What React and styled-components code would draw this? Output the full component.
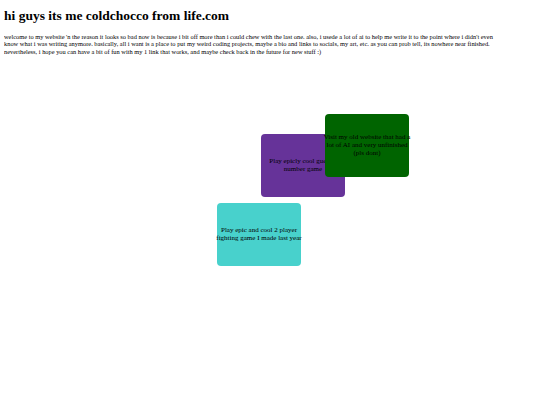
import React from "react";
import styled, { createGlobalStyle } from "styled-components";

const GlobalStyle = createGlobalStyle`
  body {
    margin: 3px 4px;
    font-family: "Liberation Serif", "Times New Roman", serif;
    background: #fff;
    color: #000;
  }
`;

const Title = styled.h1`
  font-size: 13.5px;
  font-weight: bold;
  margin: 5px 0 9px;
  line-height: 16px;
`;

const Intro = styled.p`
  font-size: 6.4px;
  line-height: 7.3px;
  margin: 0;
  max-width: 500px;
`;

const Canvas = styled.div`
  position: relative;
  height: 340px;
`;

const Card = styled.a`
  position: absolute;
  left: ${(p) => p.x}px;
  top: ${(p) => p.y}px;
  width: 84px;
  height: 63px;
  border-radius: 4px;
  background: ${(p) => p.bg};
  color: #000;
  text-decoration: none;
  font-size: 7px;
  line-height: 8px;
  display: flex;
  align-items: center;
  justify-content: center;
  text-align: center;
`;

const Label = styled.span`
  display: block;
  margin: 0 -3px;
`;

const cards = [
  { label: "Play epicly cool guess a number game", bg: "#663399", x: 257, y: 79 },
  { label: "Visit my old website that had a lot of AI and very unfinished (pls dont)", bg: "#006400", x: 321, y: 59 },
  { label: "Play epic and cool 2 player fighting game I made last year", bg: "#48d1cc", x: 213, y: 148 },
];

export default function App() {
  return (
    <>
      <GlobalStyle />
      <Title>hi guys its me coldchocco from life.com</Title>
      <Intro>
        welcome to my website 'n the reason it looks so bad now is because i bit off more than i could chew with the last one. also, i usede a lot of ai to help me write it to the point where i didn't even know what i was writing anymore. basically, all i want is a place to put my weird coding projects, maybe a bio and links to socials, my art, etc. as you can prob tell, its nowhere near finished. nevertheless, i hope you can have a bit of fun with my 1 link that works, and maybe check back in the future for new stuff :)
      </Intro>
      <Canvas>
        {cards.map((c) => (
          <Card key={c.label} href="#" bg={c.bg} x={c.x} y={c.y}>
            <Label>{c.label}</Label>
          </Card>
        ))}
      </Canvas>
    </>
  );
}
